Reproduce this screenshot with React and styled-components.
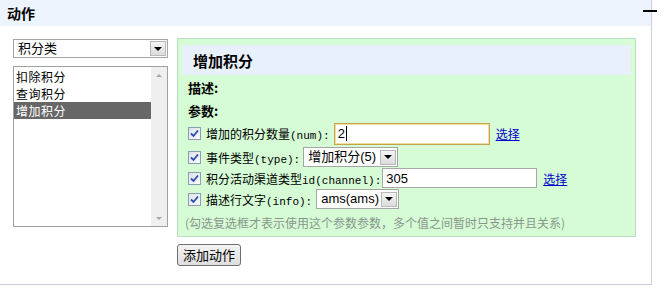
import React from 'react';
import styled, { createGlobalStyle } from 'styled-components';

const GlobalStyle = createGlobalStyle`
  body {
    margin: 0;
    background: #fff;
    font-family: "Noto Sans CJK SC", "Liberation Sans", sans-serif;
    font-size: 12px;
    color: #000;
  }
`;

const Frame = styled.div`
  position: relative;
  width: 651px;
  height: 284px;
  border-right: 1px solid #cdcdeb;
  border-bottom: 1px solid #cdcdeb;
`;

const Header = styled.div`
  height: 26px;
  background: #edf4fd;
  padding-left: 7px;
  display: flex;
  align-items: center;
  font-size: 14px;
  font-weight: bold;
`;

const Collapse = styled.span`
  position: absolute;
  top: 10px;
  right: -6px;
  width: 14px;
  height: 2px;
  background: #000;
`;

const Body = styled.div`
  display: flex;
  padding: 12px 0 0 13px;
`;

const LeftCol = styled.div`
  width: 155px;
  display: flex;
  flex-direction: column;
  padding-top: 1px;
`;

const SelectBox = styled.div`
  box-sizing: border-box;
  width: ${(p) => p.width}px;
  height: ${(p) => p.height || 19}px;
  border: 1px solid #a5a5a5;
  background: #fff;
  display: flex;
  align-items: center;
  justify-content: space-between;
  padding-left: ${(p) => p.pad || 4}px;
  padding-right: 1px;
  font-family: "Liberation Sans", "Noto Sans CJK SC", sans-serif;
  font-size: 13px;
  line-height: 16px;
  flex-shrink: 0;
`;

const ArrowBtn = styled.span`
  box-sizing: border-box;
  width: 16px;
  height: 15px;
  border: 1px solid #b8b8b8;
  background: linear-gradient(#f4f4f4, #dcdcdc);
  display: flex;
  align-items: center;
  justify-content: center;
  &::after {
    content: '';
    border-left: 4px solid transparent;
    border-right: 4px solid transparent;
    border-top: 4px solid #000;
  }
`;

const ListBox = styled.div`
  box-sizing: border-box;
  margin-top: 8px;
  width: 155px;
  height: 161px;
  border: 1px solid #a0a0a0;
  display: flex;
  background: #fff;
`;

const Options = styled.div`
  flex: 1;
  padding-top: 1px;
`;

const Option = styled.div`
  height: 17px;
  line-height: 17px;
  padding-left: 2px;
  font-size: 12px;
  letter-spacing: 0.5px;
  background: ${(p) => (p.selected ? '#676767' : 'transparent')};
  color: ${(p) => (p.selected ? '#fff' : '#000')};
`;

const Scrollbar = styled.div`
  width: 16px;
  background: #efefef;
  display: flex;
  flex-direction: column;
  justify-content: space-between;
  align-items: center;
  padding: 7px 0 6px;
`;

const ScrollArrow = styled.span`
  width: 0;
  height: 0;
  border-left: 3px solid transparent;
  border-right: 3px solid transparent;
  ${(p) => (p.down ? 'border-top: 3px solid #a8a8a8;' : 'border-bottom: 3px solid #a8a8a8;')}
`;

const RightCol = styled.div`
  margin-left: 9px;
  display: flex;
  flex-direction: column;
  align-items: flex-start;
`;

const Panel = styled.div`
  box-sizing: border-box;
  width: 459px;
  height: 199px;
  background: #d5fcd5;
  border: 1px solid #b9dcc6;
  padding: 6px 4px 0 4px;
`;

const PanelTitle = styled.div`
  height: 30px;
  background: #e8f0fb;
  display: flex;
  align-items: center;
  padding-left: 11px;
  font-size: 15px;
  font-weight: bold;
`;

const Content = styled.div`
  padding: 0 0 0 6px;
`;

const Label = styled.div`
  font-weight: bold;
  font-size: 13px;
  line-height: 16px;
  margin-top: ${(p) => p.top}px;
`;

const Row = styled.div`
  display: flex;
  align-items: center;
  height: ${(p) => p.h || 20}px;
  margin-top: ${(p) => (p.top === undefined ? 1 : p.top)}px;
`;

const Check = styled.span`
  box-sizing: border-box;
  width: 13px;
  height: 13px;
  border: 1px solid #8e9db1;
  background: linear-gradient(135deg, #dde3ec, #f8f9fb);
  display: flex;
  align-items: center;
  justify-content: center;
  margin-right: 5px;
  flex-shrink: 0;
`;

const ParamText = styled.span`
  font-size: 12px;
  white-space: nowrap;
`;

const Code = styled.span`
  font-family: "Liberation Mono", monospace;
  font-size: 11px;
`;

const TextInput = styled.div`
  box-sizing: border-box;
  width: ${(p) => p.width}px;
  height: ${(p) => p.height}px;
  margin-left: ${(p) => p.gap}px;
  border: 1px solid ${(p) => (p.focused ? '#c9a24e' : '#a8a8a8')};
  box-shadow: ${(p) => (p.focused ? 'inset 0 0 0 1px #f1dca8' : 'none')};
  background: #fff;
  display: flex;
  align-items: center;
  padding-left: 3px;
  font-family: "Liberation Sans", sans-serif;
  font-size: 13px;
`;

const Caret = styled.span`
  width: 1px;
  height: 15px;
  background: #000;
  margin-left: 1px;
`;

const Link = styled.a`
  color: #0000cc;
  text-decoration: underline;
  margin-left: 6px;
  font-size: 12px;
  cursor: pointer;
`;

const Gap = styled.span`
  width: ${(p) => p.w}px;
  flex-shrink: 0;
`;

const Note = styled.div`
  margin-top: 7px;
  margin-left: -3px;
  color: #8a968c;
  font-size: 12px;
  line-height: 14px;
  white-space: nowrap;
`;

const Button = styled.button`
  margin-top: 7px;
  height: 22px;
  padding: 0 5px;
  border: 1px solid #707070;
  border-radius: 3px;
  background: linear-gradient(#f4f4f4, #dedede);
  font-family: "Noto Sans CJK SC", sans-serif;
  font-size: 13px;
  line-height: 18px;
  color: #000;
`;

const CheckIcon = () => (
  <svg width="9" height="9" viewBox="0 0 9 9">
    <path d="M1 4.5 L3.5 7 L8 1.5" fill="none" stroke="#2b4cac" strokeWidth="1.8" />
  </svg>
);

const Select = ({ width, children, pad, height }) => (
  <SelectBox width={width} pad={pad} height={height}>
    <span>{children}</span>
    <ArrowBtn />
  </SelectBox>
);

const App = () => (
  <>
    <GlobalStyle />
    <Frame>
      <Header>动作</Header>
      <Collapse />
      <Body>
        <LeftCol>
          <Select width={155}>积分类</Select>
          <ListBox>
            <Options>
              <Option>扣除积分</Option>
              <Option>查询积分</Option>
              <Option selected>增加积分</Option>
            </Options>
            <Scrollbar>
              <ScrollArrow />
              <ScrollArrow down />
            </Scrollbar>
          </ListBox>
        </LeftCol>
        <RightCol>
          <Panel>
            <PanelTitle>增加积分</PanelTitle>
            <Content>
              <Label top={5}>描述:</Label>
              <Label top={7}>参数:</Label>
              <Row h={25} top={2}>
                <Check><CheckIcon /></Check>
                <ParamText>增加的积分数量<Code>(num):</Code></ParamText>
                <TextInput width={156} height={22} gap={4} focused>
                  2<Caret />
                </TextInput>
                <Link>选择</Link>
              </Row>
              <Row>
                <Check><CheckIcon /></Check>
                <ParamText>事件类型<Code>(type):</Code></ParamText>
                <Gap w={3} />
                <Select width={95} height={20}>增加积分(5)</Select>
              </Row>
              <Row>
                <Check><CheckIcon /></Check>
                <ParamText>积分活动渠道类型<Code>id(channel):</Code></ParamText>
                <TextInput width={155} height={20} gap={1}>305</TextInput>
                <Link>选择</Link>
              </Row>
              <Row>
                <Check><CheckIcon /></Check>
                <ParamText>描述行文字<Code>(info):</Code></ParamText>
                <Gap w={4} />
                <Select width={83} height={20}>ams(ams)</Select>
              </Row>
              <Note>(勾选复选框才表示使用这个参数参数，多个值之间暂时只支持并且关系)</Note>
            </Content>
          </Panel>
          <Button type="button">添加动作</Button>
        </RightCol>
      </Body>
    </Frame>
  </>
);

export default App;
